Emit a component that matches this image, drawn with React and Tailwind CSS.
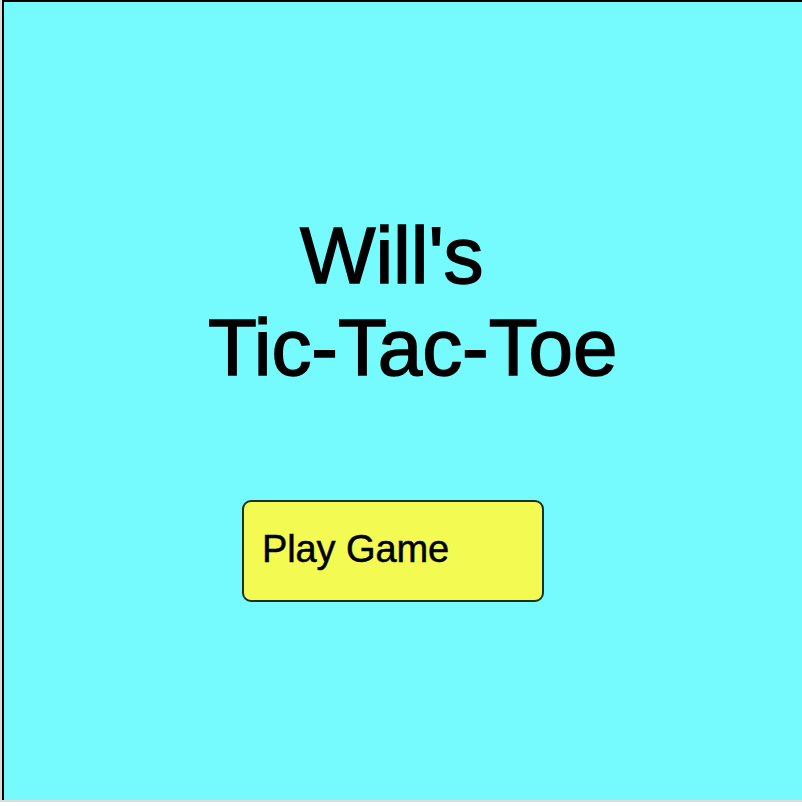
export default function App() {
  return (
    <main className="flex h-[806px] w-[802px] flex-col bg-white font-['Liberation_Sans',Arial,sans-serif] text-black">
      <div className="flex h-[802px] flex-col bg-[#dcdcdc]">
        <section className="ml-[2px] flex h-[800px] flex-col border-t-2 border-l-2 border-black bg-[#75fbfd]">
          <h1 className="mt-[208px] ml-[204px] text-[80px] leading-[92px] tracking-[-0.1px] [-webkit-text-stroke:1.5px_black]">
            <span className="ml-[92px] block">Will's</span>
            <span className="block">Tic-Tac-Toe</span>
          </h1>
          <button className="mt-[106px] ml-[238px] h-[102px] w-[302px] rounded-[9px] border-2 border-[#1d3027] bg-[#f3fb52] pb-[3px] pl-[18px] text-left text-[38px] tracking-[-0.1px] [-webkit-text-stroke:0.5px_black]">
            Play Game
          </button>
        </section>
      </div>
    </main>
  );
}
